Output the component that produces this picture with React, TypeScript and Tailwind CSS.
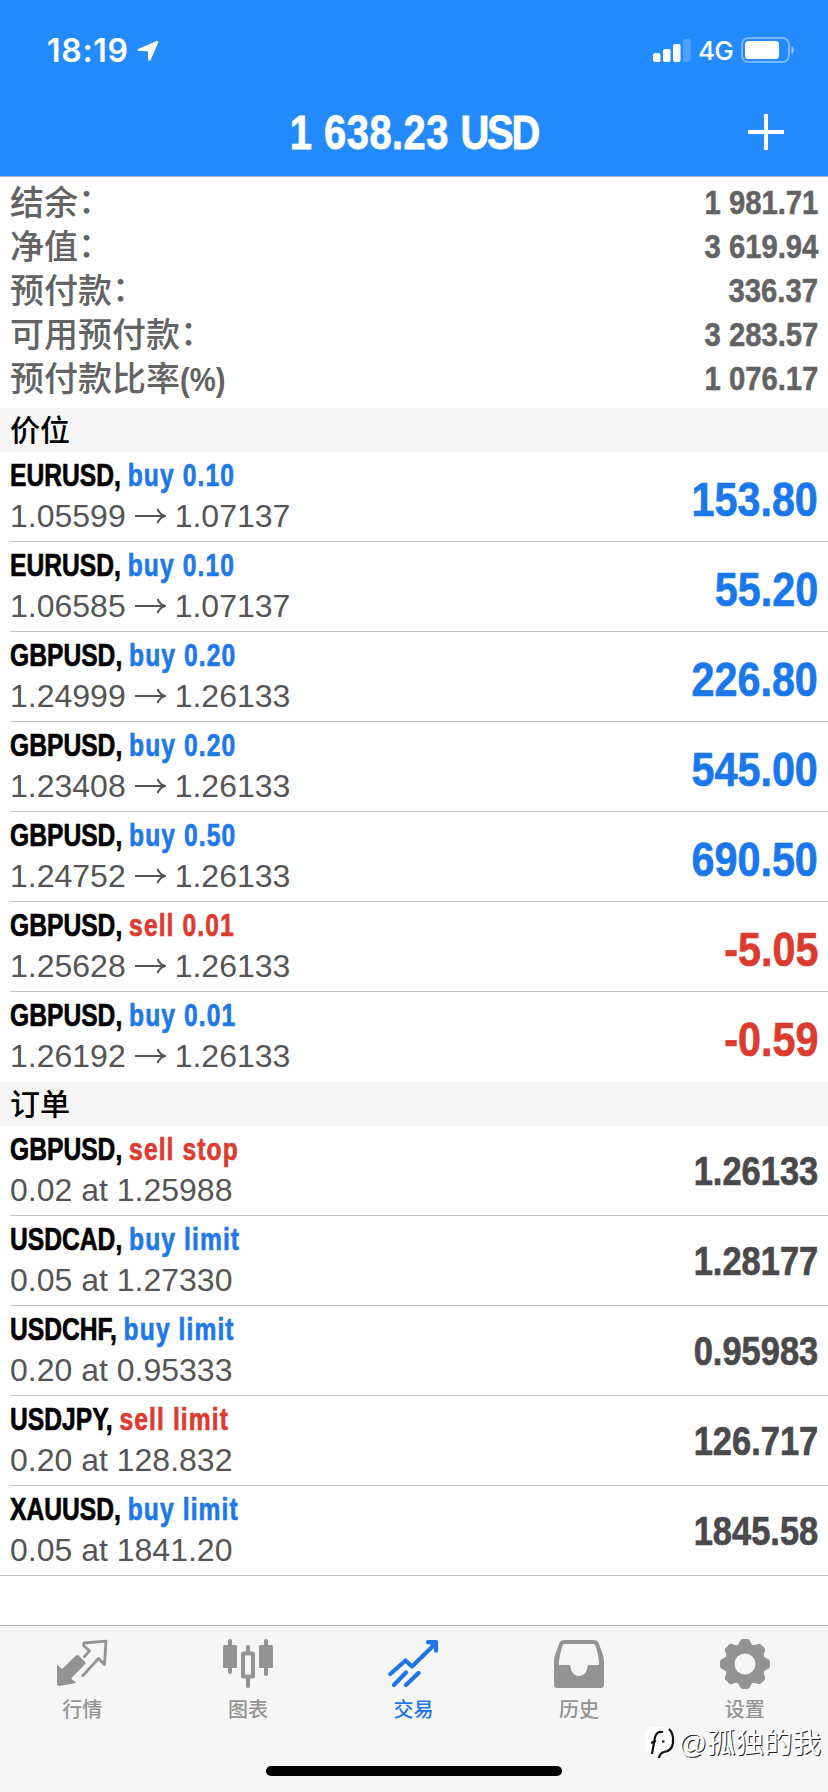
import React from 'react';

type Side = 'buy' | 'sell';

interface Row {
   symbol: string;
   side: Side;
   action: string;
   from: string;
   to?: string;
   value: string;
}

const summary = [
   { label: '结余', suffix: '：', value: '1 981.71' },
   { label: '净值', suffix: '：', value: '3 619.94' },
   { label: '预付款', suffix: '：', value: '336.37' },
   { label: '可用预付款', suffix: '：', value: '3 283.57' },
   { label: '预付款比率', suffix: '(%)', value: '1 076.17' },
];

const positions: Row[] = [
   { symbol: 'EURUSD', side: 'buy', action: 'buy 0.10', from: '1.05599', to: '1.07137', value: '153.80' },
   { symbol: 'EURUSD', side: 'buy', action: 'buy 0.10', from: '1.06585', to: '1.07137', value: '55.20' },
   { symbol: 'GBPUSD', side: 'buy', action: 'buy 0.20', from: '1.24999', to: '1.26133', value: '226.80' },
   { symbol: 'GBPUSD', side: 'buy', action: 'buy 0.20', from: '1.23408', to: '1.26133', value: '545.00' },
   { symbol: 'GBPUSD', side: 'buy', action: 'buy 0.50', from: '1.24752', to: '1.26133', value: '690.50' },
   { symbol: 'GBPUSD', side: 'sell', action: 'sell 0.01', from: '1.25628', to: '1.26133', value: '-5.05' },
   { symbol: 'GBPUSD', side: 'buy', action: 'buy 0.01', from: '1.26192', to: '1.26133', value: '-0.59' },
];

const orders: Row[] = [
   { symbol: 'GBPUSD', side: 'sell', action: 'sell stop', from: '0.02 at 1.25988', value: '1.26133' },
   { symbol: 'USDCAD', side: 'buy', action: 'buy limit', from: '0.05 at 1.27330', value: '1.28177' },
   { symbol: 'USDCHF', side: 'buy', action: 'buy limit', from: '0.20 at 0.95333', value: '0.95983' },
   { symbol: 'USDJPY', side: 'sell', action: 'sell limit', from: '0.20 at 128.832', value: '126.717' },
   { symbol: 'XAUUSD', side: 'buy', action: 'buy limit', from: '0.05 at 1841.20', value: '1845.58' },
];

const StatusBar: React.FC = () => (
   <div className="flex h-[88px] items-start justify-between pl-[47px] pr-[33px] pt-[30px] text-white">
      <div className="flex items-center">
         <span className="font-[Inter,sans-serif] text-[32px] leading-[41px] font-semibold tracking-[0.7px]">18:19</span>
         <svg className="ml-[8px]" width="22" height="22" viewBox="0 0 22 22" fill="currentColor">
            <path d="M1.200 9 19.600 1.100c1.200-.5 2.100.4 1.600 1.600L13.600 20c-.6 1.300-2.300 1.100-2.400-.4l-.3-8.300-9-.3C.2 10.900 0 9.600 1.200 9Z" />
         </svg>
      </div>
      <div className="flex h-10 items-center">
         <svg width="38" height="24" viewBox="0 0 38 24" fill="currentColor">
            <rect x="0" y="15" width="7.500" height="9" rx="2" />
            <rect x="10" y="11" width="7.500" height="13" rx="2" />
            <rect x="20" y="6" width="7.500" height="18" rx="2" />
            <rect x="30" y="1" width="7.500" height="23" rx="2" opacity=".2" />
         </svg>
         <span className="ml-[7px] w-[37px] font-[Inter,sans-serif] text-[26px] font-medium tracking-[-0.7px]">4G</span>
         <svg className="ml-[6px]" width="54" height="26" viewBox="0 0 54 26">
            <rect x="1" y="1" width="47" height="24" rx="6.500" fill="none" stroke="#fff" strokeOpacity=".4" strokeWidth="2" />
            <rect x="4" y="4" width="34" height="18" rx="3.500" fill="#fff" />
            <path d="M50.500 9v8c3-1.500 3-6.500 0-8Z" fill="#fff" fillOpacity=".5" />
         </svg>
      </div>
   </div>
);

const Header: React.FC = () => (
   <header className="h-[177px] border-b border-[#a9b4c6] bg-[#248bff]">
      <StatusBar />
      <div className="grid h-[88px] grid-cols-[1fr_300px_1fr] items-center text-white">
         <span />
         <h1 className="flex origin-center scale-x-[0.83] justify-center text-[48px] leading-[90px] font-bold whitespace-pre [-webkit-text-stroke:0.8px]">
            <span className="tracking-[0.6px]">1 638.23 </span>
            <span className="tracking-[-2.6px]">USD</span>
         </h1>
         <svg className="mr-[44px] mb-[3px] justify-self-end" width="36" height="36" viewBox="0 0 36 36" stroke="currentColor" strokeWidth="4">
            <path d="M18 0v36M0 18h36" />
         </svg>
      </div>
   </header>
);

const SectionTitle: React.FC<{ children: React.ReactNode }> = ({ children }) => (
   <h2 className="h-11 bg-[#f6f6f6] pl-[10px] text-[30px] leading-[45px] font-medium text-black">{children}</h2>
);

const Arrow: React.FC = () => (
   <svg className="mr-[9px] ml-[9px]" width="31" height="16" viewBox="0 0 31 16" fill="none" stroke="currentColor" strokeWidth="2">
      <path d="M0 8h29.500M22.500 1c1.500 3.500 4 6 7.500 7-3.500 1-6 3.500-7.500 7" />
   </svg>
);

const valueColor = (row: Row) => {
   if (!row.to) return 'text-[#4a4a4c]';
   return row.value.startsWith('-') ? 'text-[#dc3b30]' : 'text-[#1a78ec]';
};

const TradeRow: React.FC<{ row: Row; line?: 'inset' | 'full' | 'none' }> = ({ row, line = 'inset' }) => (
   <div
      className={`flex h-[90px] justify-between border-b pr-[10px] ${line === 'full' ? 'pl-[10px]' : 'ml-[10px]'} ${
         line === 'none' ? 'border-transparent' : 'border-[#c4c4c6]'
      }`}
   >
      <div>
         <div className="h-[46px] origin-left scale-x-[0.77] text-[32px] leading-[46px] font-bold whitespace-pre [-webkit-text-stroke:0.7px]">
            <span className="text-black">{row.symbol}, </span>
            <span className={`tracking-[1.4px] ${row.side === 'buy' ? 'text-[#1f78e8]' : 'text-[#dc3b30]'}`}>{row.action}</span>
         </div>
         <div className="flex h-9 items-center text-[32px] leading-9 text-[#555]">
            <span>{row.from}</span>
            {row.to && (
               <>
                  <Arrow />
                  <span>{row.to}</span>
               </>
            )}
         </div>
      </div>
      <span
         className={`origin-right text-right font-bold [-webkit-text-stroke:0.7px] ${
            row.to ? 'scale-x-[0.86] text-[48px] leading-[95px]' : 'scale-x-[0.84] text-[41px] leading-[91px]'
         } ${valueColor(row)}`}
      >
         {row.value}
      </span>
   </div>
);

const MarketIcon = () => (
   <svg width="52" height="52" viewBox="0 0 52 52" fill="currentColor">
      <path d="M0 29.500q.3-1.500 1.500-.7L5 32 19 18.500q1.500-1.200 2.800 0L28 25q1 1.200 0 2.200L14 41.500l4.500 3.500q.5 1-.5 1.200L2 49q-2 0-2-2Z" />
      <path d="M26.500 20.500 32.500 14 26.500 8.500 27 6 49 4.200 47.500 27.500 41.500 21.500 25 39.500" fill="none" stroke="currentColor" strokeWidth="2.800" strokeLinejoin="round" />
   </svg>
);

const ChartIcon = () => (
   <svg width="52" height="52" viewBox="0 0 52 52" fill="currentColor">
      <rect x="1" y="8" width="14" height="23" rx="1.500" />
      <rect x="6" y="2" width="4" height="35" rx="2" />
      <rect x="37" y="8" width="14" height="23" rx="1.500" />
      <rect x="42" y="2" width="4" height="37" rx="2" />
      <rect x="21" y="16.500" width="10" height="23" rx=".5" fill="none" stroke="currentColor" strokeWidth="4" />
      <rect x="24" y="8" width="4" height="8" rx="2" />
      <rect x="24" y="40" width="4" height="11" rx="2" />
   </svg>
);

const TradeIcon = () => (
   <svg width="52" height="52" viewBox="0 0 52 52" fill="none" stroke="currentColor" strokeWidth="4.200" strokeLinecap="round" strokeLinejoin="round">
      <path d="M2.300 37 17.500 23.500l6.500 6L47 7M40 5.200h8v8.500M6 48 18 35.500M18 48l12.500-12" />
      <path d="M40 5.200h8v8Z" fill="currentColor" stroke="none" />
   </svg>
);

const HistoryIcon = () => (
   <svg className="-ml-px" width="52" height="52" viewBox="0 0 52 52" fill="currentColor" fillRule="evenodd">
      <path d="M11.500 3h29q4 0 5.300 3.500L50 18q1 3 1 7v22.500q0 3.500-3.500 3.500h-43Q1 51 1 47.500V25q0-4 1-7L6.200 6.500Q7.500 3 11.500 3Zm0 4q-1.600 0-2 1.500Q6.500 17 5.700 26.500q0 1.500 1 1.500H16q1.300 0 1.500 1.500c.3 5 3.800 9.500 8.500 9.500s8.200-4.500 8.500-9.500Q34.700 28 36 28h9.300q1 0 1-1.500Q45.500 17 42.500 8.500 42 7 40.500 7Z" />
   </svg>
);

const SettingsIcon = () => (
   <svg width="52" height="52" viewBox="0 0 52 52" fill="currentColor">
      {[0, 45, 90, 135].map((angle) => (
         <path
            key={angle}
            transform={`rotate(${angle} 26 27)`}
            d="M17 9q2.500-1 3.500-4 1-3 3-3h5q2 0 3 3t3.500 4v36q-2.500 1-3.500 4-1 3-3 3h-5q-2 0-3-3t-3.500-4Z"
         />
      ))}
      <circle cx="26" cy="27" r="10.500" className="fill-[#f6f6f6]" />
   </svg>
);

const tabs = [
   { name: '行情', icon: MarketIcon },
   { name: '图表', icon: ChartIcon },
   { name: '交易', icon: TradeIcon, active: true },
   { name: '历史', icon: HistoryIcon },
   { name: '设置', icon: SettingsIcon },
];

const TabBar: React.FC = () => (
   <nav className="relative h-[167px] border-t border-[#b2b2b2] bg-[#f6f6f6]">
      <div className="grid grid-cols-5 pt-[11px]">
         {tabs.map(({ name, icon: Icon, active }) => (
            <div key={name} className={`flex flex-col items-center ${active ? 'text-[#1f75e6]' : 'text-[#939393]'}`}>
               <Icon />
               <span className="mt-[7px] -ml-px text-[20px] leading-[28px] font-medium">{name}</span>
            </div>
         ))}
      </div>
      <div className="absolute right-[7px] bottom-[31px] flex items-center text-[28.5px] leading-9 text-white [text-shadow:1px_1px_0_#222]">
         <svg className="mr-[2px]" width="32" height="34" viewBox="0 0 32 34" fill="none">
            <path d="M9 1h13q7 1 7 8v10q-1 8-9 9l-4 3v-3H8q-7-1-7-8V9Q2 1 9 1Z" fill="#fff" />
            <path d="M25 3q4 4 4 10v4q-1 8-9 9-4 1-5 6M19 6q-6-1-8 5L8 28M7 17l5-2M18 15.500h2.500" stroke="#111" strokeWidth="2.200" />
         </svg>
         <span>@孤独的我</span>
      </div>
      <div className="absolute bottom-4 left-[266px] h-[10px] w-[296px] rounded-full bg-black" />
   </nav>
);

const App: React.FC = () => {
   return (
      <div className="flex h-[1792px] w-[828px] flex-col overflow-hidden bg-white font-['Liberation_Sans','Noto_Sans_CJK_SC',sans-serif]">
         <Header />
         <main className="flex-1">
            <section className="h-[231px] pt-[3px] pr-[10px] pl-[10px] text-[34px] text-[#636363]">
               {summary.map((item) => (
                  <div key={item.label} className="flex h-11 justify-between leading-11 font-medium">
                     <span className="flex pt-px">
                        {item.label}
                        {item.suffix === '：' ? (
                           <span className="-translate-y-[2px]">：</span>
                        ) : (
                           <span className="origin-left scale-x-[0.86] font-bold">{item.suffix}</span>
                        )}
                     </span>
                     <span className="origin-right scale-x-[0.86] font-bold [-webkit-text-stroke:0.5px]">{item.value}</span>
                  </div>
               ))}
            </section>
            <SectionTitle>价位</SectionTitle>
            {positions.map((row, i) => (
               <TradeRow key={i} row={row} line={i === positions.length - 1 ? 'none' : 'inset'} />
            ))}
            <SectionTitle>订单</SectionTitle>
            {orders.map((row, i) => (
               <TradeRow key={row.symbol} row={row} line={i === orders.length - 1 ? 'full' : 'inset'} />
            ))}
         </main>
         <TabBar />
      </div>
   );
};

export default App;
